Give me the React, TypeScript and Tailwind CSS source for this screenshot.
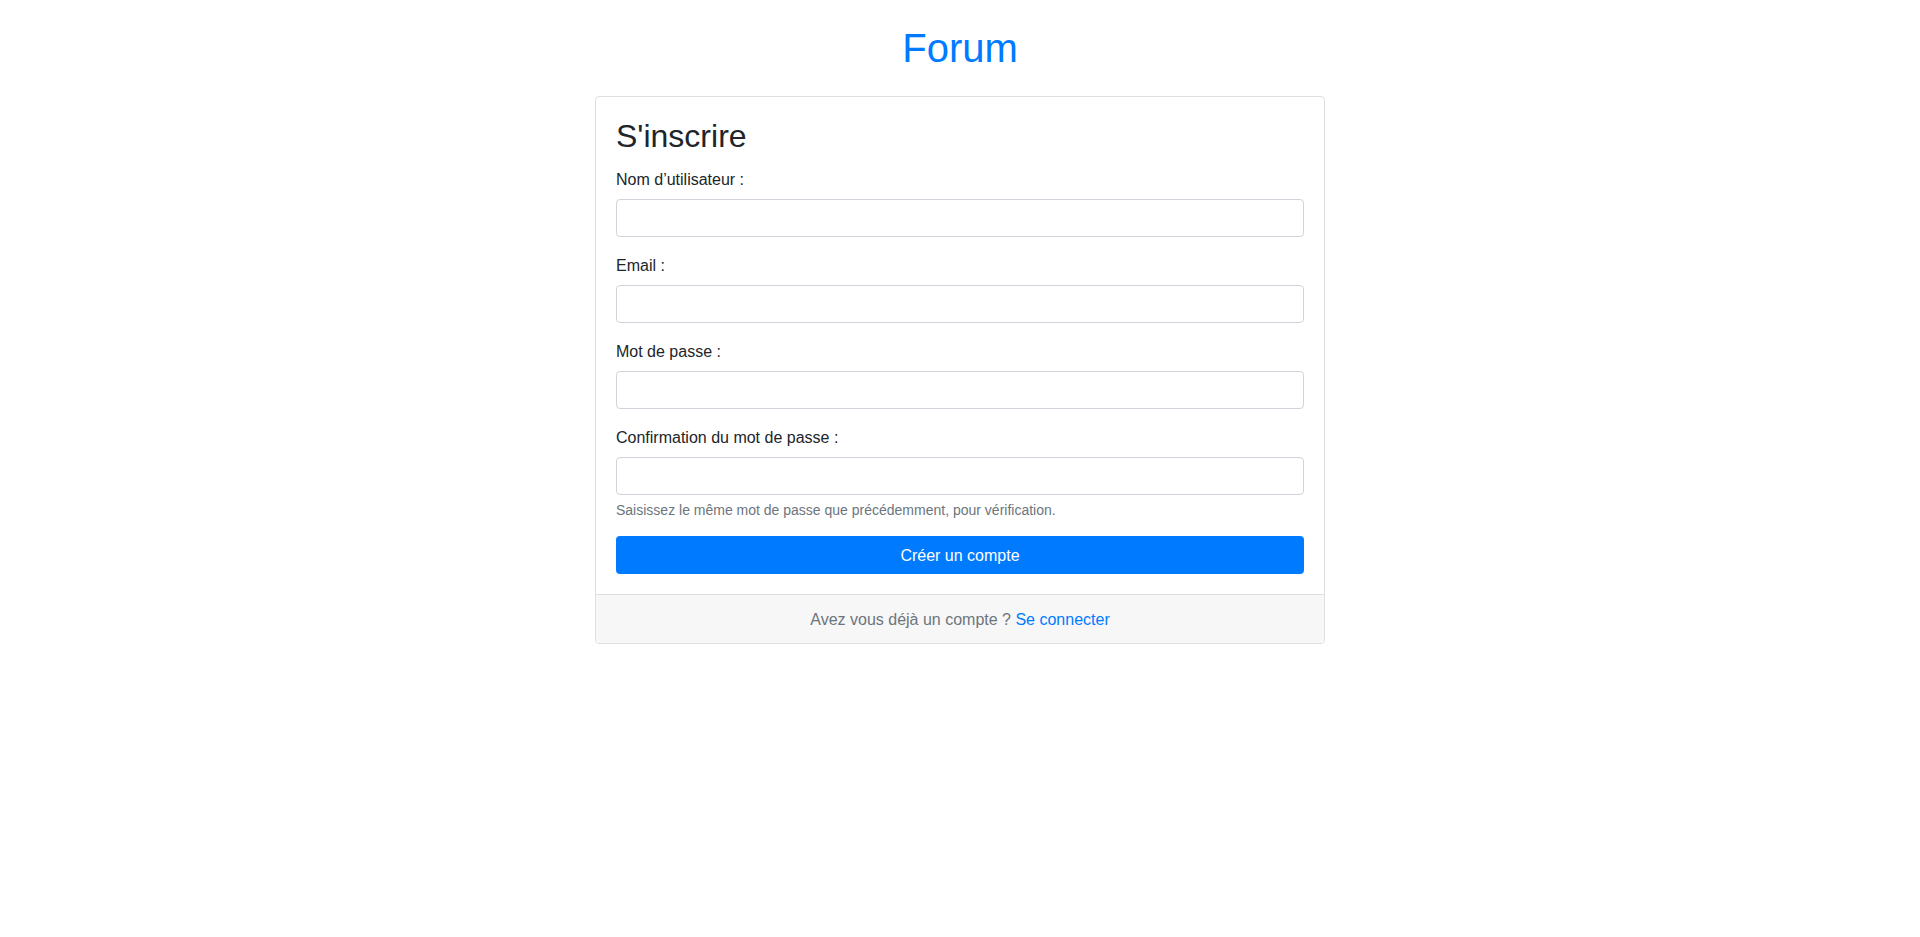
import React from 'react';

interface FieldProps {
    id: string;
    label: string;
    type?: string;
    help?: string;
}

const Field: React.FC<FieldProps> = ({ id, label, type = 'text', help }) => {
    return (
        <div className="mb-4">
            <label
                htmlFor={id}
                className="block pt-px mb-[7px] text-base leading-6 text-[#212529]"
            >
                {label}
            </label>
            <input
                id={id}
                type={type}
                className="block w-full h-[38px] px-3 py-1.5 text-base text-[#495057] bg-white border border-[#ced4da] rounded-[4px] focus:outline-none"
            />
            {help && (
                <small className="block mt-1 pt-px text-[14px] leading-[20px] text-[#6c757d]">
                    {help}
                </small>
            )}
        </div>
    );
};

export default function App() {
    return (
        <div className="min-h-[937px] bg-white font-['Liberation_Sans',Arial,sans-serif] text-[#212529]">
            <h1 className="pt-6 pb-6 text-center text-[40px] leading-[48px] text-[#007bff]">
                Forum
            </h1>
            <div className="w-[730px] mx-auto border border-[#dfdfdf] rounded-[4px] overflow-hidden">
                <div className="px-5 pt-5 pb-5">
                    <h2 className="mb-3 text-[32px] leading-[38.4px] text-[#212529]">S'inscrire</h2>
                    <form
                        onSubmit={(e) => {
                            e.preventDefault();
                        }}
                    >
                        <Field id="username" label="Nom d’utilisateur :" />
                        <Field id="email" label="Email :" type="email" />
                        <Field id="password1" label="Mot de passe :" type="password" />
                        <Field
                            id="password2"
                            label="Confirmation du mot de passe :"
                            type="password"
                            help="Saisissez le même mot de passe que précédemment, pour vérification."
                        />
                        <button
                            type="submit"
                            className="block w-full h-[38px] pt-px text-base text-white bg-[#007bff] rounded-[4px] hover:bg-[#0069d9]"
                        >
                            Créer un compte
                        </button>
                    </form>
                </div>
                <div className="px-5 pt-[13px] pb-[11px] text-center text-base leading-6 text-[#6c757d] bg-[#f7f7f7] border-t border-[#dfdfdf]">
                    Avez vous déjà un compte ?{' '}
                    <a href="#" className="text-[#007bff] hover:underline">
                        Se connecter
                    </a>
                </div>
            </div>
        </div>
    );
}
